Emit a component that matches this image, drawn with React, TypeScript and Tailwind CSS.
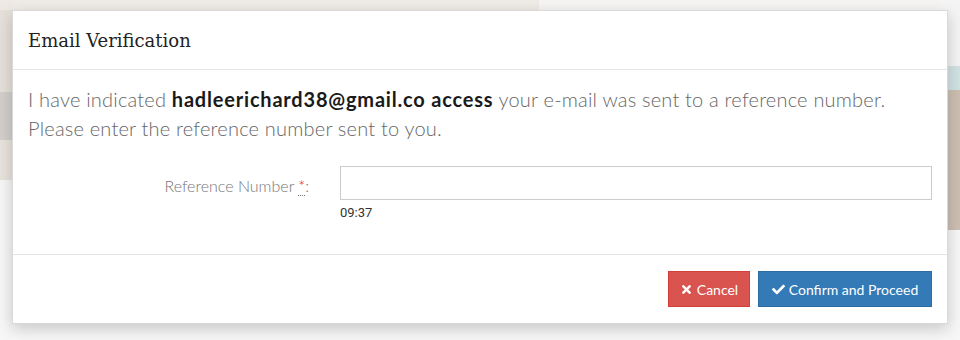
import { FaCheck, FaTimes } from 'react-icons/fa';

function Backdrop() {
  // faded page that shows round the dialog
  return (
    <div className="flex h-[340px] w-[960px]">
      <div className="flex w-[12px] flex-col">
        <div className="h-[10px] bg-[#efe9e3]" />
        <div className="h-[82px] bg-[#e6e0da]" />
        <div className="h-[48px] bg-[#d3cfcc]" />
        <div className="h-[40px] bg-[#e9e3dd]" />
        <div className="flex-1 bg-[#f7f7f7]" />
      </div>
      <div className="flex flex-1 flex-col bg-[#f8f8f8]">
        <div className="flex h-[10px]">
          <div className="w-[527px] bg-[#efebe6]" />
          <div className="flex-1 bg-[#f7f5f3]" />
        </div>
      </div>
      <div className="flex w-[12px] flex-col">
        <div className="h-[66px] bg-[#f4f4f4]" />
        <div className="h-[24px] bg-[#d2e3e4]" />
        <div className="h-[140px] bg-[#cdbfb2]" />
        <div className="flex-1 bg-[#f7f7f7]" />
      </div>
    </div>
  );
}

export default function App() {
  return (
    <div className="relative h-[340px] w-[960px] overflow-hidden">
      <Backdrop />

      <div className="absolute left-[12px] top-[10px] w-[936px] border border-[#d9d9d9] bg-white font-['Lato',sans-serif] shadow-[0_5px_15px_rgba(0,0,0,0.2)]">
        <div className="flex h-[59px] items-center border-b border-[#e5e5e5] px-[15px]">
          <h4 className="font-['DejaVu_Serif',serif] text-[18px] text-[#222]">Email Verification</h4>
        </div>

        <div className="h-[184px] px-[15px] pt-[15px]">
          <p className="text-[20px] font-light leading-[29px] tracking-[0.2px] text-[#666]">
            I have indicated{' '}
            <b className="font-bold tracking-[0.8px] text-[#1a1a1a]">hadleerichard38@gmail.co access</b> your
            e-mail was sent to a reference number. Please enter the reference number sent to you.
          </p>
          <div className="mt-[23px] flex">
            <label className="w-[281px] pt-[8px] text-right text-[16px] font-light text-[#777]">
              Reference Number{' '}
              <abbr className="cursor-help border-b border-dotted border-[#777] text-[#e00] no-underline">*</abbr>:
            </label>
            <div className="ml-[31px] flex-1">
              <input className="h-[34px] w-full border border-[#ccc] bg-white outline-none" />
              <div className="mt-[3px] font-['Roboto',sans-serif] text-[13px] text-[#333]">09:37</div>
            </div>
          </div>
        </div>

        <div className="flex justify-end gap-[8px] border-t border-[#e5e5e5] px-[15px] py-[16px]">
          <button className="flex h-[36px] w-[82px] items-center justify-center gap-[4px] border border-[#d43f3a] bg-[#d9534f] text-[14px] text-white">
            <FaTimes size={13} />
            Cancel
          </button>
          <button className="flex h-[36px] w-[174px] items-center justify-center gap-[4px] border border-[#2e6da4] bg-[#337ab7] text-[14px] text-white">
            <FaCheck size={13} />
            Confirm and Proceed
          </button>
        </div>
      </div>
    </div>
  );
}
